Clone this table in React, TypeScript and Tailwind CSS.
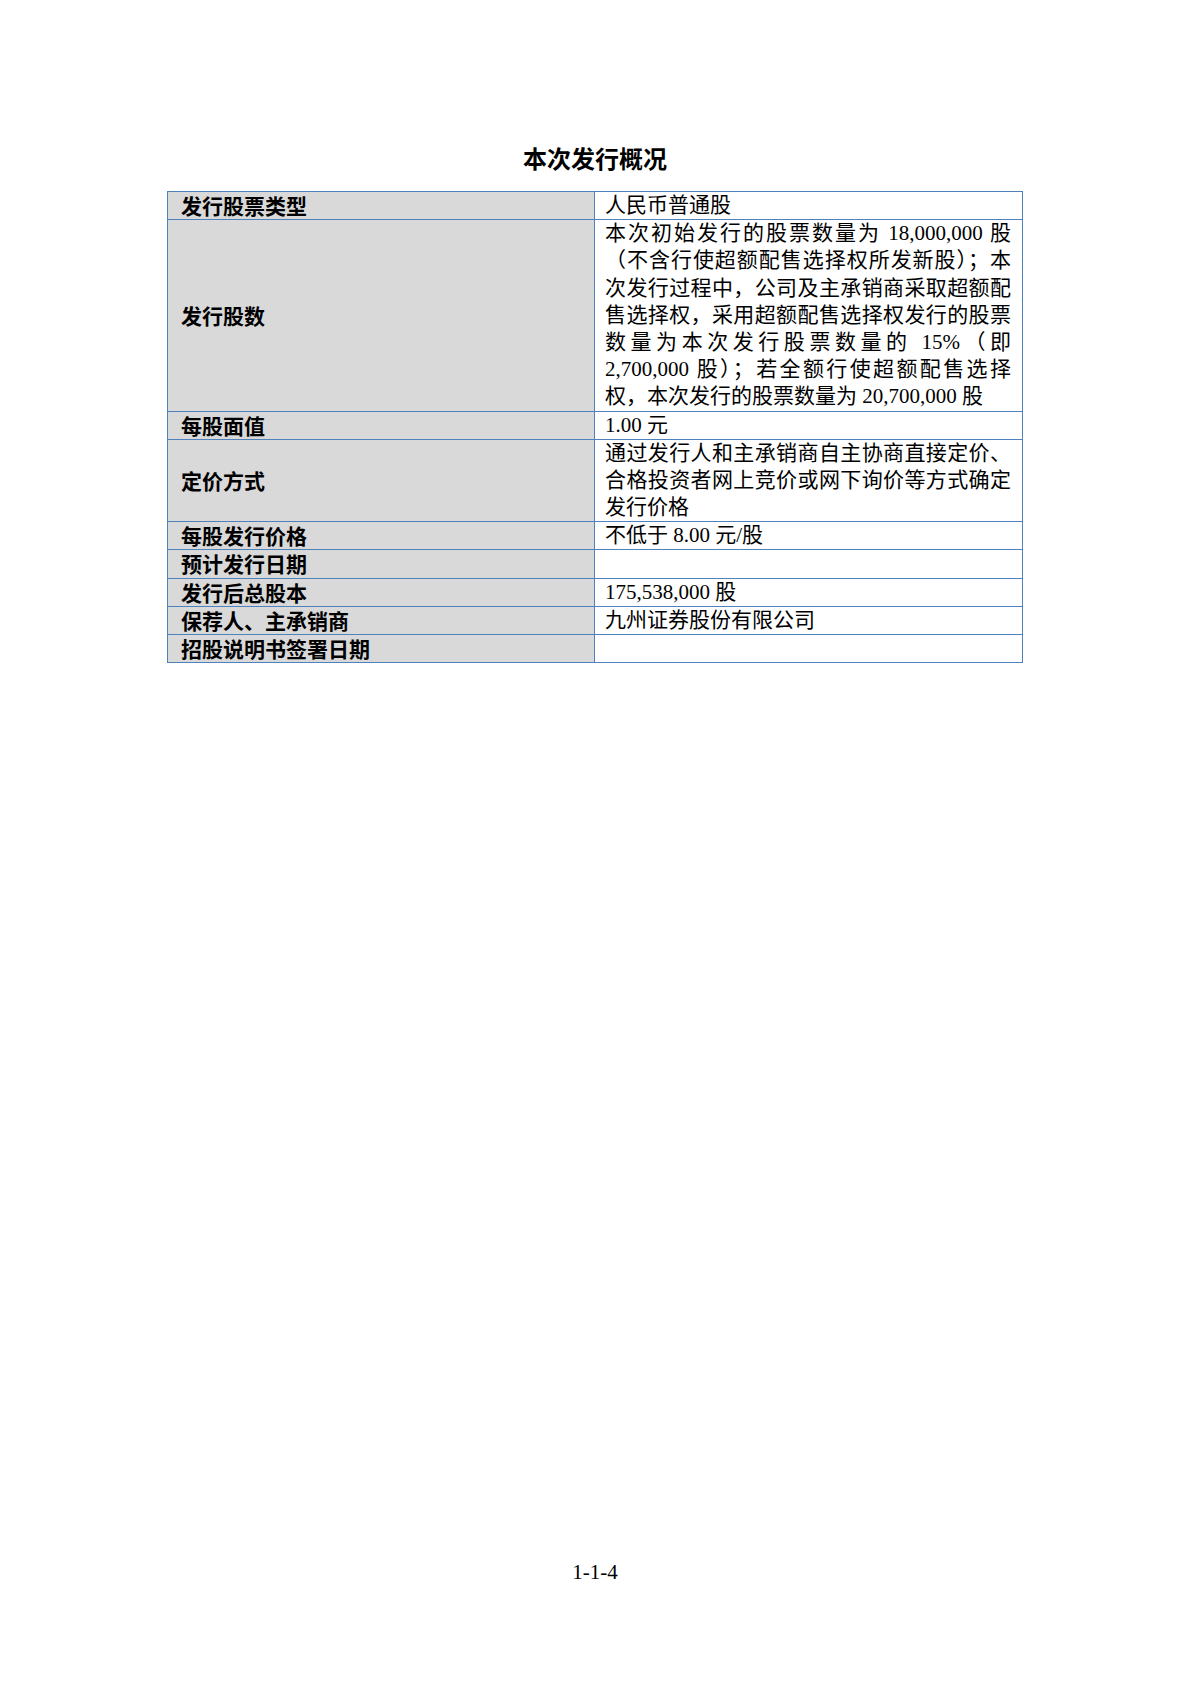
const rows: { label: string; lines: string[] }[] = [
  { label: '发行股票类型', lines: ['人民币普通股'] },
  {
    label: '发行股数',
    lines: [
      '本次初始发行的股票数量为 18,000,000 股',
      '（不含行使超额配售选择权所发新股）；本',
      '次发行过程中，公司及主承销商采取超额配',
      '售选择权，采用超额配售选择权发行的股票',
      '数量为本次发行股票数量的 15%（即',
      '2,700,000 股）；若全额行使超额配售选择',
      '权，本次发行的股票数量为 20,700,000 股',
    ],
  },
  { label: '每股面值', lines: ['1.00 元'] },
  {
    label: '定价方式',
    lines: [
      '通过发行人和主承销商自主协商直接定价、',
      '合格投资者网上竞价或网下询价等方式确定',
      '发行价格',
    ],
  },
  { label: '每股发行价格', lines: ['不低于 8.00 元/股'] },
  { label: '预计发行日期', lines: [''] },
  { label: '发行后总股本', lines: ['175,538,000 股'] },
  { label: '保荐人、主承销商', lines: ['九州证券股份有限公司'] },
  { label: '招股说明书签署日期', lines: [''] },
];

const App = () => {
  return (
    <div className="w-[1190px] h-[1683px] bg-white text-black flex flex-col items-center">
      {/* 标题 */}
      <h1 className="mt-[142px] h-[32px] leading-[32px] text-[24px] font-bold font-['Noto_Sans_CJK_SC',sans-serif]">
        本次发行概况
      </h1>

      {/* 表格 */}
      <table className="mt-[17px] w-[855px] table-fixed border-collapse border border-[#4f81bd]">
        <colgroup>
          <col className="w-[427px]" />
          <col className="w-[428px]" />
        </colgroup>
        <tbody>
          {rows.map((row) => (
            <tr key={row.label}>
              <td className="border border-[#4f81bd] bg-[#d9d9d9] py-0 pl-[13px] align-middle text-[21px] leading-[27.2px] font-bold font-['Noto_Sans_CJK_SC',sans-serif]">
                {row.label}
              </td>
              <td className="border border-[#4f81bd] py-0 pl-[10px] pr-[11px] align-top text-[21px] leading-[27.2px] font-['Liberation_Serif','Noto_Sans_CJK_SC',serif]">
                {row.lines.map((line, i) => (
                  <div
                    key={i}
                    className={
                      i < row.lines.length - 1
                        ? 'h-[27.2px] text-justify [text-align-last:justify]'
                        : 'h-[27.2px]'
                    }
                  >
                    {line}
                  </div>
                ))}
              </td>
            </tr>
          ))}
        </tbody>
      </table>

      {/* 页码 */}
      <div className="mt-auto mb-[97px] text-[21px] leading-[27px] font-['Liberation_Serif',serif]">
        1-1-4
      </div>
    </div>
  );
};

export default App;
